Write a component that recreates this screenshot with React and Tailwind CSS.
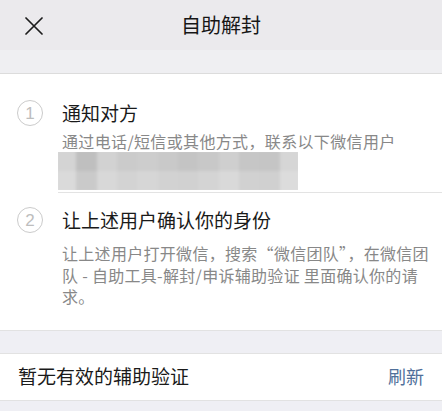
const blurCells = [
  ["bg-[#d4d4d4]", "bg-[#bfbfbf]", "bg-[#d2d2d2]", "bg-[#cbcbcb]", "bg-[#cdcdcd]", "bg-[#c9c9c9]", "bg-[#c4c4c4]", "bg-[#c8c8c8]", "bg-[#cfcfcf]", "bg-[#c6c6c6]", "bg-[#c5c5c5]", "bg-[#d6d6d6]"],
  ["bg-[#dadada]", "bg-[#cacaca]", "bg-[#d8d8d8]", "bg-[#d3d3d3]", "bg-[#d6d6d6]", "bg-[#d2d2d2]", "bg-[#d1d1d1]", "bg-[#d4d4d4]", "bg-[#d9d9d9]", "bg-[#d1d1d1]", "bg-[#d0d0d0]", "bg-[#dcdcdc]"],
];

function StepCircle({ n }) {
  return (
    <div className="w-[26px] h-[26px] rounded-full border border-[#cbcbcb] flex items-center justify-center text-[17px] leading-none text-[#bdbdbd] font-['Liberation_Sans',sans-serif]">
      {n}
    </div>
  );
}

function CloseIcon() {
  return (
    <svg width="18" height="18" viewBox="0 0 18 18" fill="none" stroke="#1c1c1c" strokeWidth="1.7" strokeLinecap="round">
      <path d="M1 1 L17 17 M17 1 L1 17" />
    </svg>
  );
}

export default function App() {
  return (
    <div className="w-[442px] h-[411px] overflow-hidden bg-[#efeff4] font-['Noto_Sans_CJK_SC',sans-serif]">
      {/* nav bar */}
      <div className="relative h-[50px] bg-[#ebeaed] flex items-center justify-center">
        <div className="absolute left-[25px] top-[17px]">
          <CloseIcon />
        </div>
        <span className="text-[20px] text-[#161616] leading-none">自助解封</span>
      </div>

      <div className="h-[24px] bg-[#efeff2] border-b border-[#dcdcdc]" />

      {/* steps card */}
      <div className="bg-white pt-[26px] pb-[22px]">
        <div className="flex">
          <div className="w-[58px] pl-[17px]">
            <StepCircle n="1" />
          </div>
          <div className="flex-1">
            <div className="pl-[4px] text-[19px] leading-[26px] text-[#1a1a1a]">通知对方</div>
            <div className="pl-[4px] mt-[4px] text-[16px] leading-[22px] tracking-[0.35px] text-[#888888]">
              通过电话/短信或其他方式，联系以下微信用户
            </div>
            <div className="w-[240px] h-[38px] overflow-hidden">
              <div className="flex flex-col blur-[1.5px] -m-[2px]">
                {blurCells.map((row, i) => (
                  <div key={i} className="flex h-[21px]">
                    {row.map((c, j) => (
                      <div key={j} className={`flex-1 ${c}`} />
                    ))}
                  </div>
                ))}
              </div>
            </div>
            <div className="mt-[2px] border-b border-[#e3e3e3]" />
          </div>
        </div>

        <div className="flex mt-[14px]">
          <div className="w-[58px] pl-[17px]">
            <StepCircle n="2" />
          </div>
          <div className="flex-1 pr-[10px]">
            <div className="pl-[4px] text-[19px] leading-[26px] text-[#1a1a1a]">让上述用户确认你的身份</div>
            <div className="pl-[4px] mt-[10px] text-[16px] leading-[21.5px] tracking-[0.3px] text-[#888888]">
              让上述用户打开微信，搜索“微信团队”，在微信团队 - 自助工具-解封/申诉辅助验证 里面确认你的请求。
            </div>
          </div>
        </div>
      </div>

      <div className="h-[23px] border-t border-[#e2e2e2]" />

      {/* assist row */}
      <div className="h-[48px] bg-white border-y border-[#e2e2e2] flex items-center justify-between pl-[18px] pr-[18px]">
        <span className="text-[19px] text-[#1a1a1a]">暂无有效的辅助验证</span>
        <span className="text-[18px] text-[#50709a]">刷新</span>
      </div>
    </div>
  );
}
